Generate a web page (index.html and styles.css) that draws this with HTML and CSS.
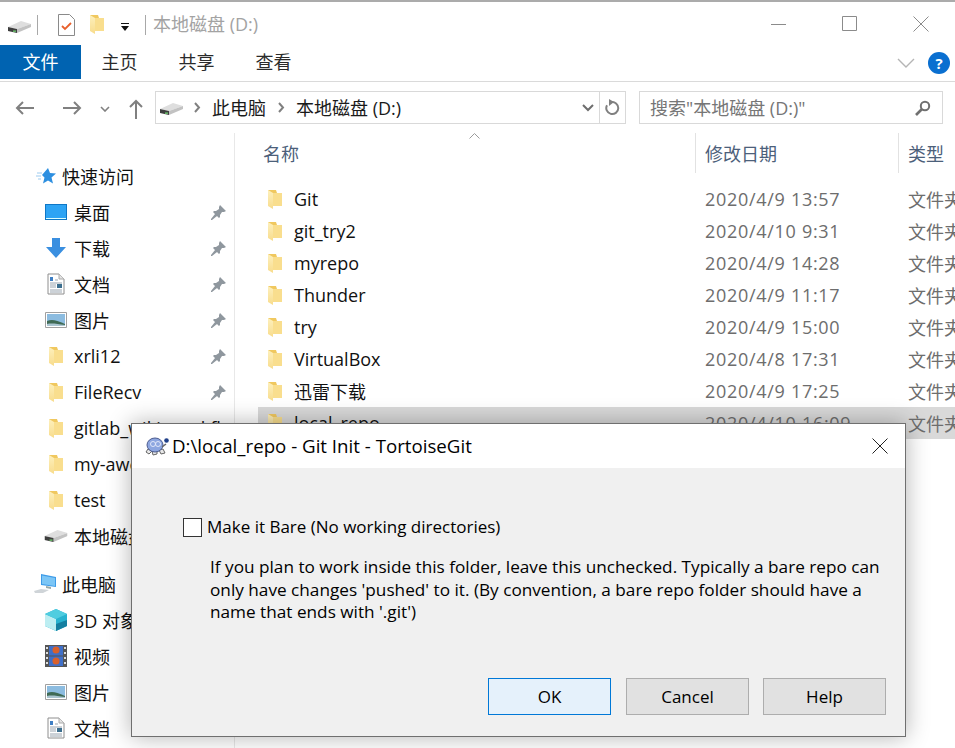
FILE: index.html
```html
<!DOCTYPE html>
<html lang="zh-CN">
<head>
  <meta charset="UTF-8">
  <title>本地磁盘 (D:)</title>
  <link rel="stylesheet" href="styles.css">
</head>
<body>
  <svg class="defs" width="0" height="0">
    <defs>
      <linearGradient id="flap" x1="0" y1="0" x2="0" y2="1">
        <stop offset="0" stop-color="#fdf0bd"/>
        <stop offset="1" stop-color="#f8dc8c"/>
      </linearGradient>
    </defs>
    <symbol id="folder" viewBox="0 0 14 19">
      <path d="M0 0h8l1 3h5v13H4z" fill="#f0c85f"/>
      <path d="M4 3h10v13H4z" fill="#f9de8e"/>
      <path d="M0 0l5 3v16l-5-3z" fill="url(#flap)"/>
    </symbol>
    <symbol id="drive" viewBox="0 0 23 12">
      <path d="M0 6 13 0l10 3L9 8z" fill="#dedede"/>
      <path d="M9 8l14-5v3L9 12z" fill="#c2c2c2"/>
      <path d="M0 6l9 2v4l-9-2z" fill="#3e3e3e"/>
      <path d="M5 9.500h3v1.300H5z" fill="#6fd06f"/>
    </symbol>
    <symbol id="pin" viewBox="0 0 16 16">
      <path d="M9 1l6 6-2 1-2 0-2 3 0 2-1 1-6-6 1-1 2 0 3-2 0-2z M4 10l2 2-5 4-1 0 0-1z" fill="#8f979e"/>
    </symbol>
    <symbol id="doc" viewBox="0 0 18 22">
      <path d="M1 1h11l5 5v15H1z" fill="#fff" stroke="#8e8e8e"/>
      <path d="M12 1v5h5" fill="#e4e4e4" stroke="#aaa"/>
      <path d="M3 4h3v4H3z" fill="#3f7fc4"/>
      <path d="M8 7h3M3 10h12M3 17h12M3 19h12" stroke="#9aa5b0"/>
      <path d="M10 11h5v4h-5z" fill="#3c6f8f"/>
      <path d="M3 12h6M3 14h6" stroke="#9aa5b0"/>
    </symbol>
    <symbol id="pic" viewBox="0 0 22 16">
      <path d="M.5.5h21v15H.5z" fill="#fff" stroke="#a0a0a0"/>
      <path d="M2 2h18v12H2z" fill="#8cbce0"/>
      <path d="M2 9c5-2 9-1 18 3v2H2z" fill="#3f6a55"/>
      <path d="M2 12c5-1 10 0 18 1v1H2z" fill="#a9c4d0"/>
    </symbol>
  </svg>

  <div class="explorer">
    <header class="titlebar">
      <svg class="tb-drive" width="23" height="12"><use href="#drive"/></svg>
      <i class="tb-sep"></i>
      <svg class="tb-check" width="17" height="22" viewBox="0 0 17 22">
        <path d="M.5.5h11l5 5v16H.5z" fill="#fff" stroke="#8a8a8a"/>
        <path d="M4 12l3 3 6-6" fill="none" stroke="#e8602c" stroke-width="1.800"/>
      </svg>
      <svg class="tb-folder" width="14" height="21"><use href="#folder"/></svg>
      <svg class="tb-drop" width="10" height="8" viewBox="0 0 10 8"><path d="M1 0h8v1H1zM1 3h8L5 8z" fill="#111"/></svg>
      <i class="tb-sep tb-sep2"></i>
      <span class="tb-title">本地磁盘 (D:)</span>
      <div class="win-btns">
        <svg width="16" height="16" viewBox="0 0 16 16"><path d="M0 8.500h15" stroke="#8b8b8b"/></svg>
        <svg width="16" height="16" viewBox="0 0 16 16"><path d="M.5.5h14v14H.5z" fill="none" stroke="#8b8b8b"/></svg>
        <svg width="16" height="16" viewBox="0 0 16 16"><path d="M.5.5l15 15M15.500.5l-15 15" stroke="#8b8b8b"/></svg>
      </div>
    </header>

    <nav class="ribbon">
      <span class="tab tab-file">文件</span>
      <span class="tab">主页</span>
      <span class="tab">共享</span>
      <span class="tab">查看</span>
      <div class="ribbon-right">
        <svg width="18" height="10" viewBox="0 0 18 10"><path d="M1 1l8 8 8-8" fill="none" stroke="#b5b5b5" stroke-width="1.400"/></svg>
        <span class="help">?</span>
      </div>
    </nav>

    <div class="addressrow">
      <svg class="nav-arrow" width="20" height="16" viewBox="0 0 20 16"><path d="M19 8H2M8 2 2 8l6 6" fill="none" stroke="#808080" stroke-width="2"/></svg>
      <svg class="nav-arrow" width="20" height="16" viewBox="0 0 20 16"><path d="M1 8h17M12 2l6 6-6 6" fill="none" stroke="#808080" stroke-width="2"/></svg>
      <svg class="nav-down" width="10" height="6" viewBox="0 0 10 6"><path d="M1 1l4 4 4-4" fill="none" stroke="#808080" stroke-width="1.600"/></svg>
      <svg class="nav-up" width="16" height="20" viewBox="0 0 16 20"><path d="M8 20V2M2 8l6-6 6 6" fill="none" stroke="#808080" stroke-width="2"/></svg>
      <div class="addressbox">
        <svg class="ab-drive" width="23" height="12"><use href="#drive"/></svg>
        <svg class="crumb" width="7" height="11" viewBox="0 0 7 11"><path d="M1 1l4 4.500-4 4.500" fill="none" stroke="#808080" stroke-width="2"/></svg>
        <span class="ab-text">此电脑</span>
        <svg class="crumb" width="7" height="11" viewBox="0 0 7 11"><path d="M1 1l4 4.500-4 4.500" fill="none" stroke="#808080" stroke-width="2"/></svg>
        <span class="ab-text">本地磁盘 (D:)</span>
        <svg class="ab-down" width="12" height="8" viewBox="0 0 12 8"><path d="M1 1l5 5 5-5" fill="none" stroke="#6e6e6e" stroke-width="2"/></svg>
        <span class="ab-refresh">
          <svg width="16" height="17" viewBox="0 0 16 17"><path d="M6 3.200a6 6 0 1 1-4 3" fill="none" stroke="#808080" stroke-width="2"/><path d="M4 0l5 3-5 4z" fill="#808080"/></svg>
        </span>
      </div>
      <div class="searchbox">
        <span class="ab-text">搜索"本地磁盘 (D:)"</span>
        <svg width="16" height="16" viewBox="0 0 16 16"><circle cx="10" cy="6" r="4.200" fill="none" stroke="#707070" stroke-width="2"/><path d="M7 9l-6 6" stroke="#707070" stroke-width="2.600"/></svg>
      </div>
    </div>

    <div class="main">
      <aside class="navpane">
        <div class="nav-item nav-head">
          <svg width="20" height="18" viewBox="0 0 20 18"><path d="M12 1l2 5 6 .5-4.500 4 1.500 6-5-3-5 3 1.500-6L6 8z" fill="#2d8fe0"/><path d="M1 6h5M0 9h5M2 12h3" stroke="#9ccbf0"/></svg>
          <span>快速访问</span>
        </div>
        <div class="nav-item">
          <svg width="22" height="16" viewBox="0 0 22 16"><path d="M0 0h22v16H0z" fill="#0f77c6"/><path d="M1 1h20v13H1z" fill="#2ea4f4"/><path d="M1 14h20v1H1z" fill="#dff"/></svg>
          <span>桌面</span><svg class="pin" width="16" height="16"><use href="#pin"/></svg>
        </div>
        <div class="nav-item">
          <svg width="20" height="20" viewBox="0 0 20 20"><path d="M6 0h8v9h6l-10 11L0 9h6z" fill="#3a8fe0"/></svg>
          <span>下载</span><svg class="pin" width="16" height="16"><use href="#pin"/></svg>
        </div>
        <div class="nav-item">
          <svg width="18" height="22"><use href="#doc"/></svg>
          <span>文档</span><svg class="pin" width="16" height="16"><use href="#pin"/></svg>
        </div>
        <div class="nav-item">
          <svg width="22" height="16"><use href="#pic"/></svg>
          <span>图片</span><svg class="pin" width="16" height="16"><use href="#pin"/></svg>
        </div>
        <div class="nav-item">
          <svg width="14" height="19"><use href="#folder"/></svg>
          <span>xrli12</span><svg class="pin" width="16" height="16"><use href="#pin"/></svg>
        </div>
        <div class="nav-item">
          <svg width="14" height="19"><use href="#folder"/></svg>
          <span>FileRecv</span><svg class="pin" width="16" height="16"><use href="#pin"/></svg>
        </div>
        <div class="nav-item">
          <svg width="14" height="19"><use href="#folder"/></svg>
          <span>gitlab_wiki_workflow</span>
        </div>
        <div class="nav-item">
          <svg width="14" height="19"><use href="#folder"/></svg>
          <span>my-awesome-project</span>
        </div>
        <div class="nav-item">
          <svg width="14" height="19"><use href="#folder"/></svg>
          <span>test</span>
        </div>
        <div class="nav-item">
          <svg width="23" height="12"><use href="#drive"/></svg>
          <span>本地磁盘 (D:)</span>
        </div>
        <div class="nav-item nav-head nav-gap">
          <svg width="24" height="20" viewBox="0 0 24 20"><path d="M7 0l15 3v10L7 11z" fill="#3d9be8"/><path d="M8 1.500l13 2.500v8L8 10z" fill="#7cc6f6"/><path d="M12 12l5 1v2l-5-1z" fill="#9aa"/><path d="M0 17l7-2 8 1-6 3H1z" fill="#cfd4d8"/></svg>
          <span>此电脑</span>
        </div>
        <div class="nav-item">
          <svg width="22" height="22" viewBox="0 0 22 22"><path d="M11 0l11 5v12l-11 5-11-5V5z" fill="#28b3d0"/><path d="M0 5l11 5v12L0 17z" fill="#bdeef2"/><path d="M11 0l11 5-11 5L0 5z" fill="#4fcde0"/><path d="M11 15l11-4v6l-11 5z" fill="#157fa0"/></svg>
          <span>3D 对象</span>
        </div>
        <div class="nav-item">
          <svg width="22" height="22" viewBox="0 0 22 22"><path d="M0 0h22v22H0z" fill="#555"/><path d="M4 1h14v9.500H4z" fill="#3f6fc8"/><path d="M4 11.500h14V21H4z" fill="#3f6fc8"/><circle cx="11" cy="5" r="3.500" fill="#d8602c"/><circle cx="11" cy="16" r="3.500" fill="#d8602c"/><path d="M1 2h2v2H1zM1 7h2v2H1zM1 12h2v2H1zM1 17h2v2H1zM19 2h2v2h-2zM19 7h2v2h-2zM19 12h2v2h-2zM19 17h2v2h-2z" fill="#ddd"/></svg>
          <span>视频</span>
        </div>
        <div class="nav-item">
          <svg width="22" height="16"><use href="#pic"/></svg>
          <span>图片</span>
        </div>
        <div class="nav-item">
          <svg width="18" height="22"><use href="#doc"/></svg>
          <span>文档</span>
        </div>
      </aside>

      <section class="files">
        <div class="col-head">
          <svg class="sort" width="11" height="6" viewBox="0 0 11 6"><path d="M.5 5.500l5-5 5 5" fill="none" stroke="#9a9a9a"/></svg>
          <span class="col col-name">名称</span>
          <span class="col col-date">修改日期</span>
          <span class="col col-type">类型</span>
        </div>
        <div class="file-row"><svg width="14" height="19"><use href="#folder"/></svg><span class="f-name">Git</span><span class="f-date">2020/4/9 13:57</span><span class="f-type">文件夹</span></div>
        <div class="file-row"><svg width="14" height="19"><use href="#folder"/></svg><span class="f-name">git_try2</span><span class="f-date">2020/4/10 9:31</span><span class="f-type">文件夹</span></div>
        <div class="file-row"><svg width="14" height="19"><use href="#folder"/></svg><span class="f-name">myrepo</span><span class="f-date">2020/4/9 14:28</span><span class="f-type">文件夹</span></div>
        <div class="file-row"><svg width="14" height="19"><use href="#folder"/></svg><span class="f-name">Thunder</span><span class="f-date">2020/4/9 11:17</span><span class="f-type">文件夹</span></div>
        <div class="file-row"><svg width="14" height="19"><use href="#folder"/></svg><span class="f-name">try</span><span class="f-date">2020/4/9 15:00</span><span class="f-type">文件夹</span></div>
        <div class="file-row"><svg width="14" height="19"><use href="#folder"/></svg><span class="f-name">VirtualBox</span><span class="f-date">2020/4/8 17:31</span><span class="f-type">文件夹</span></div>
        <div class="file-row"><svg width="14" height="19"><use href="#folder"/></svg><span class="f-name">迅雷下载</span><span class="f-date">2020/4/9 17:25</span><span class="f-type">文件夹</span></div>
        <div class="file-row selected"><svg width="14" height="19"><use href="#folder"/></svg><span class="f-name">local_repo</span><span class="f-date">2020/4/10 16:09</span><span class="f-type">文件夹</span></div>
      </section>
    </div>
  </div>

  <div class="dialog">
    <div class="dlg-title">
      <svg width="24" height="20" viewBox="0 0 24 20">
        <path d="M3 13l-2 3 3 2 3-3zM14 14l2 4 4-1-2-4z" fill="#e8e8e8" stroke="#666"/>
        <path d="M7 15l1 4 4-1v-3z" fill="#e8e8e8" stroke="#666"/>
        <ellipse cx="10" cy="9" rx="8" ry="7" fill="#8da6e0" stroke="#4c5c90"/>
        <circle cx="8" cy="8" r="2.500" fill="none" stroke="#e0e6f8"/>
        <circle cx="13" cy="8" r="2.500" fill="none" stroke="#e0e6f8"/>
        <path d="M17 11l4-3" stroke="#666" stroke-width="1.500"/>
        <circle cx="21.500" cy="4.500" r="2.300" fill="#1f3f88"/>
      </svg>
      <span>D:\local_repo - Git Init - TortoiseGit</span>
      <svg class="dlg-close" width="16" height="16" viewBox="0 0 16 16"><path d="M.5.5l15 15M15.500.5l-15 15" stroke="#222"/></svg>
    </div>
    <div class="dlg-body">
      <label class="check-row"><i class="checkbox"></i><span>Make it Bare (No working directories)</span></label>
      <p class="dlg-text">If you plan to work inside this folder, leave this unchecked. Typically a bare repo can<br>only have changes 'pushed' to it. (By convention, a bare repo folder should have a<br>name that ends with '.git')</p>
      <div class="dlg-buttons">
        <button class="btn btn-default">OK</button>
        <button class="btn">Cancel</button>
        <button class="btn">Help</button>
      </div>
    </div>
  </div>
</body>
</html>
```

FILE: styles.css
```css
* {
  box-sizing: border-box;
}

html, body {
  margin: 0;
  height: 100%;
}

body {
  width: 955px;
  height: 748px;
  overflow: hidden;
  position: relative;
  background: #fff;
  color: #1a1a1a;
  font-family: "Open Sans", "Noto Sans CJK SC", sans-serif;
  font-size: 17px;
}

svg {
  flex: none;
  display: block;
}

.defs {
  position: absolute;
}

.explorer {
  border-top: 2px solid #ababab;
}

/* title bar */
.titlebar {
  height: 43px;
  display: flex;
  align-items: center;
  padding-left: 8px;
}

.tb-drive {
  margin-top: 6px;
}

.tb-sep {
  width: 1px;
  height: 20px;
  background: #a8a8a8;
  margin-left: 6px;
  margin-top: 2px;
}

.tb-check {
  margin-left: 20px;
  margin-top: 2px;
}

.tb-folder {
  margin-left: 15px;
  margin-top: 2px;
}

.tb-drop {
  margin-left: 16px;
  margin-top: 6px;
}

.tb-sep2 {
  margin-left: 15px;
}

.tb-title {
  margin-left: 7px;
  color: #a3a3a3;
  font-size: 18px;
  margin-bottom: 2px;
}

.win-btns {
  margin-left: auto;
  display: flex;
  gap: 55px;
  padding-right: 26px;
  align-items: center;
  margin-top: 1px;
}

/* ribbon tabs */
.ribbon {
  height: 37px;
  display: flex;
  border-bottom: 1px solid #dadada;
  align-items: center;
}

.tab {
  width: 77px;
  text-align: center;
  font-size: 18px;
  color: #2b2b2b;
  margin-bottom: 4px;
}

.tab-file {
  width: 81px;
  height: 34px;
  line-height: 34px;
  background: #0063b1;
  color: #fff;
  align-self: flex-start;
  margin-bottom: 0;
}

.ribbon-right {
  margin-left: auto;
  display: flex;
  align-items: center;
  gap: 13px;
  padding-right: 5px;
}

.help {
  width: 22px;
  height: 22px;
  border-radius: 50%;
  background: #0a6fd0;
  color: #fff;
  font-weight: 700;
  font-size: 15px;
  line-height: 22px;
  text-align: center;
}

/* address row */
.addressrow {
  height: 51px;
  display: flex;
  align-items: center;
  padding-left: 15px;
}

.nav-arrow + .nav-arrow {
  margin-left: 27px;
}

.nav-down {
  margin-left: 18px;
  margin-top: 2px;
}

.nav-up {
  margin-left: 18px;
  margin-top: 3px;
}

.addressbox {
  margin-left: 11px;
  width: 471px;
  height: 33px;
  border: 1px solid #d9d9d9;
  display: flex;
  align-items: center;
  padding-left: 4px;
  font-size: 18px;
}

.ab-text {
  margin-bottom: 2px;
}

.ab-drive {
  margin-right: 11px;
  margin-top: 3px;
}

.crumb {
  margin-right: 11px;
}

.addressbox .crumb ~ .crumb {
  margin-left: 12px;
}

.ab-down {
  margin-left: auto;
  margin-right: 5px;
}

.ab-refresh {
  width: 26px;
  height: 100%;
  border-left: 1px solid #d9d9d9;
  display: flex;
  align-items: center;
  justify-content: center;
}

.searchbox {
  margin-left: 13px;
  width: 304px;
  height: 33px;
  border: 1px solid #d9d9d9;
  display: flex;
  align-items: center;
  justify-content: space-between;
  padding: 0 11px 0 10px;
  color: #767676;
  font-size: 18px;
}

/* main area */
.main {
  display: flex;
  height: 615px;
}

.navpane {
  width: 235px;
  border-right: 1px solid #e8e8e8;
  padding-top: 25px;
  overflow: hidden;
  flex: none;
}

.nav-item {
  height: 36px;
  display: flex;
  align-items: center;
  position: relative;
  padding-left: 74px;
  white-space: nowrap;
  font-size: 18px;
  color: #111;
}

.nav-item > svg:first-child {
  position: absolute;
  left: 56px;
  transform: translateX(-50%);
}

.nav-head {
  padding-left: 62px;
}

.nav-head > svg:first-child {
  left: 46px;
}

.nav-gap {
  margin-top: 12px;
}

.pin {
  position: absolute;
  left: 211px;
}

.files {
  flex: 1;
  min-width: 0;
  overflow: hidden;
  padding-left: 23px;
}

.col-head {
  height: 41px;
  display: flex;
  position: relative;
  margin-bottom: 9px;
  color: #4c607a;
  font-size: 18px;
  white-space: nowrap;
}

.col {
  display: flex;
  align-items: center;
  height: 40px;
}

.col-name {
  width: 437px;
  padding-left: 5px;
}

.col-date {
  width: 203px;
  border-left: 1px solid #e2e2e2;
  padding-left: 9px;
}

.col-type {
  border-left: 1px solid #e2e2e2;
  padding-left: 9px;
}

.sort {
  position: absolute;
  left: 211px;
  top: 0;
}

.file-row {
  height: 32px;
  display: flex;
  align-items: center;
  padding-left: 10px;
  white-space: nowrap;
  font-size: 18px;
  color: #111;
}

.f-name {
  width: 411px;
  margin-left: 12px;
  flex: none;
}

.f-date {
  width: 203px;
  flex: none;
  color: #6d6d6d;
  letter-spacing: 0.7px;
}

.f-type {
  color: #6d6d6d;
}

.selected {
  background: #d9d9d9;
}

/* dialog */
.dialog {
  position: absolute;
  left: 131px;
  top: 423px;
  width: 775px;
  height: 314px;
  border: 1px solid #6f6f6f;
  background: #f0f0f0;
  box-shadow: 0 0 22px rgba(0, 0, 0, 0.3);
  display: flex;
  flex-direction: column;
  color: #000;
}

.dlg-title {
  height: 44px;
  background: #fff;
  display: flex;
  align-items: center;
  padding-left: 13px;
  font-size: 18.7px;
  flex: none;
}

.dlg-title span {
  margin-left: 3px;
  margin-bottom: 2px;
}

.dlg-close {
  margin-left: auto;
  margin-right: 17px;
}

.dlg-body {
  flex: 1;
  padding: 47px 19px 21px 51px;
  display: flex;
  flex-direction: column;
}

.check-row {
  display: flex;
  align-items: center;
  gap: 5px;
}

.check-row span {
  margin-bottom: 1px;
}

.checkbox {
  width: 19px;
  height: 19px;
  background: #fff;
  border: 1px solid #333;
}

.dlg-text {
  margin: 17px 0 0 27px;
  line-height: 22.5px;
  white-space: nowrap;
  font-size: 17.2px;
}

.dlg-buttons {
  margin-top: auto;
  display: flex;
  justify-content: flex-end;
  gap: 14px;
}

.btn {
  width: 123px;
  height: 37px;
  background: #e1e1e1;
  border: 1px solid #adadad;
  font: inherit;
  color: #000;
}

.btn-default {
  background: #e5f1fb;
  border-color: #0078d7;
  margin-right: 1px;
}
```
